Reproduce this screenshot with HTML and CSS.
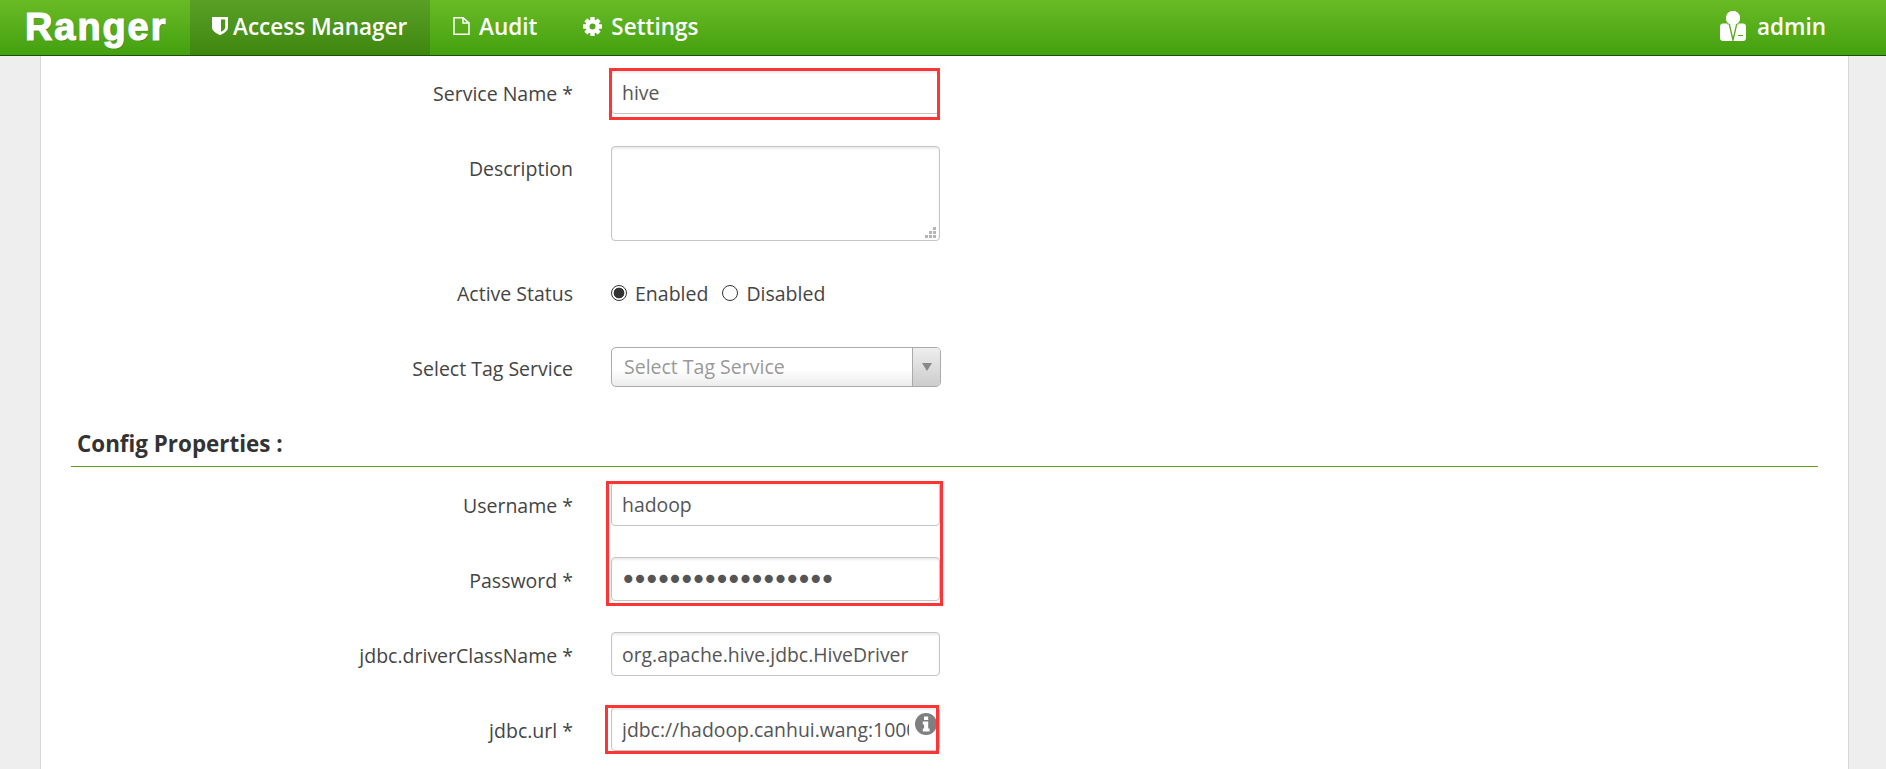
FILE: index.html
```html
<!DOCTYPE html>
<html lang="en">
<head>
<meta charset="utf-8">
<title>Ranger - Service</title>
<link rel="stylesheet" href="styles.css">
</head>
<body>
<header class="navbar">
  <a class="brand">Ranger</a>
  <nav class="nav-items">
    <a class="nav-item nav-item-active">
      <svg class="nav-icon icon-shield" viewBox="0 0 16 18"><path fill="#fff" d="M0 0h16v10.500c0 3.500-4.500 6-8 7.500-3.500-1.500-8-4-8-7.500z"/><path fill="#4c941b" d="M9 2.500h4.200v7.800c0 2-2.500 3.600-4.200 4.500z"/></svg>
      <span>Access Manager</span>
    </a>
    <a class="nav-item">
      <svg class="nav-icon icon-file" viewBox="0 0 17 18"><path fill="none" stroke="#fff" stroke-width="1.500" d="M1 .8h9l6 5v11.400H1z"/><path fill="none" stroke="#fff" stroke-width="1.500" d="M10 1v5h6"/></svg>
      <span>Audit</span>
    </a>
    <a class="nav-item">
      <svg class="nav-icon icon-gear" viewBox="0 0 19 19"><g fill="#fff"><rect x="7.300" y="0" width="4.400" height="19" rx=".6"/><rect x="7.300" y="0" width="4.400" height="19" rx=".6" transform="rotate(45 9.500 9.500)"/><rect x="7.300" y="0" width="4.400" height="19" rx=".6" transform="rotate(90 9.500 9.500)"/><rect x="7.300" y="0" width="4.400" height="19" rx=".6" transform="rotate(135 9.500 9.500)"/><circle cx="9.500" cy="9.500" r="7"/></g><circle cx="9.500" cy="9.500" r="3" fill="#55a81c"/></svg>
      <span>Settings</span>
    </a>
  </nav>
  <a class="user">
    <svg class="user-icon" viewBox="0 0 26 30"><circle cx="13" cy="7" r="7" fill="#fff"/><path fill="#fff" d="M3 12.500h20c1.700 0 3 1.300 3 3V27c0 1.700-1.300 3-3 3H3c-1.700 0-3-1.300-3-3V15.500c0-1.700 1.300-3 3-3z"/><path fill="#56a81c" d="M8.500 12.500h1.300L13 26l3.200-13.500h1.300L13.500 30h-1zM18 24h5v1h-5z"/><path fill="#56a81c" d="M7 12.500h12v.8H7z"/><circle cx="13" cy="7" r="7" fill="#fff"/></svg>
    <span>admin</span>
  </a>
</header>

<main class="panel">
  <div class="row">
    <label class="label">Service Name *</label>
    <input class="field" type="text" value="hive">
  </div>
  <div class="row row-description">
    <label class="label">Description</label>
    <div class="field-wrap">
      <textarea class="field field-area"></textarea>
      <svg class="grip" viewBox="0 0 11 11"><g fill="#b5b5b5"><rect x="8" y="0" width="3" height="3"/><rect x="4" y="4" width="3" height="3"/><rect x="8" y="4" width="3" height="3"/><rect x="0" y="8" width="3" height="3"/><rect x="4" y="8" width="3" height="3"/><rect x="8" y="8" width="3" height="3"/></g></svg>
    </div>
  </div>
  <div class="row row-status">
    <label class="label label-status">Active Status</label>
    <div class="radios">
      <span class="radio radio-on"></span><span class="radio-text">Enabled</span>
      <span class="radio radio-second"></span><span class="radio-text">Disabled</span>
    </div>
  </div>
  <div class="row row-select">
    <label class="label label-select">Select Tag Service</label>
    <div class="select">
      <span class="select-text">Select Tag Service</span>
      <span class="select-arrow"><i class="triangle"></i></span>
    </div>
  </div>

  <h2 class="section-title">Config Properties :</h2>

  <div class="row">
    <label class="label">Username *</label>
    <input class="field" type="text" value="hadoop">
  </div>
  <div class="row">
    <label class="label">Password *</label>
    <input class="field field-password" type="password" value="abcdefghijklmnopqr">
  </div>
  <div class="row">
    <label class="label">jdbc.driverClassName *</label>
    <input class="field" type="text" value="org.apache.hive.jdbc.HiveDriver">
  </div>
  <div class="row">
    <label class="label">jdbc.url *</label>
    <div class="field-wrap">
      <input class="field field-url" type="text" value="jdbc://hadoop.canhui.wang:10000">
      <svg class="info-icon" viewBox="0 0 22 22"><circle cx="11" cy="11" r="11" fill="#7f7f7f"/><path fill="#fff" d="M9 3.500h4.200v3.400H9zM7.800 8.600h5.400v7h1.400v3H7.800v-3h1.300v-4H7.800z"/></svg>
    </div>
  </div>
</main>

<div class="mark mark-service"></div>
<div class="mark mark-credentials"></div>
<div class="mark mark-url"></div>
</body>
</html>
```
FILE: styles.css
```css
* { box-sizing: border-box; }

html, body {
  margin: 0;
  height: 769px;
  overflow: hidden;
}

body {
  position: relative;
  display: flex;
  flex-direction: column;
  background: #eeeeee;
  font-family: "Open Sans", "Liberation Sans", sans-serif;
  color: #444444;
}

.navbar {
  flex: none;
  display: flex;
  align-items: stretch;
  height: 56px;
  background: linear-gradient(#69bb25, #44a010);
  border-bottom: 1px solid #1f4f06;
  color: #ffffff;
}

.brand {
  width: 190px;
  padding-left: 25px;
  font-family: "Liberation Sans", Arial, sans-serif;
  font-size: 38px;
  font-weight: 700;
  line-height: 54px;
  letter-spacing: 1.900px;
  -webkit-text-stroke: 1.200px #ffffff;
  text-shadow: 1px 1px 1px rgba(60, 60, 60, 0.45);
}

.nav-items {
  display: flex;
}

.nav-item {
  display: flex;
  align-items: center;
  gap: 9px;
  padding: 0 23px 3px;
  font-size: 22.500px;
  font-weight: 600;
}

.nav-item-active {
  width: 240px;
  gap: 5px;
  padding: 0 0 3px 22px;
  background: linear-gradient(#5aa027, #3e870f);
}

.nav-icon { flex: none; }
.icon-shield { width: 16px; height: 18px; }
.icon-file { width: 17px; height: 18px; }
.icon-gear { width: 19px; height: 19px; }

.user {
  display: flex;
  align-items: center;
  gap: 11px;
  margin-left: auto;
  padding: 0 60px 3px 0;
  font-size: 22.500px;
  font-weight: 600;
}

.user-icon { width: 26px; height: 30px; }

.panel {
  flex: 1;
  width: 1809px;
  margin-left: 40px;
  padding: 14px 30px 0;
  background: #ffffff;
  border-left: 1px solid #d6d6d6;
  border-right: 1px solid #d6d6d6;
}

.row {
  display: flex;
  gap: 38px;
  margin-bottom: 31px;
}

.label {
  width: 502px;
  height: 44px;
  padding-top: 3px;
  font-size: 19.500px;
  line-height: 42px;
  text-align: right;
}

.field {
  display: block;
  width: 329px;
  height: 44px;
  padding: 0 10px;
  font-family: inherit;
  font-size: 19.400px;
  color: #555555;
  background: #ffffff;
  border: 1px solid #c4c4c4;
  border-radius: 4px;
  box-shadow: inset 0 2px 2px rgba(0, 0, 0, 0.08);
  outline: none;
}

.field-password {
  font-family: "DejaVu Sans", sans-serif;
  font-size: 28px;
  letter-spacing: -4.800px;
  padding-left: 8px;
}

.field-area {
  height: 95px;
  margin-top: 1px;
  resize: none;
}

.grip {
  position: absolute;
  right: 4px;
  bottom: 3px;
  width: 11px;
  height: 11px;
}

.row-description { margin-bottom: 0; }

.row-status {
  align-items: center;
  height: 30px;
  margin-top: 37px;
  margin-bottom: 0;
}

.label-status {
  height: 30px;
  padding-top: 1px;
  line-height: 30px;
}

.radios {
  display: flex;
  align-items: center;
  font-size: 19.500px;
}

.radio {
  flex: none;
  width: 16px;
  height: 16px;
  border: 1px solid #333333;
  border-radius: 50%;
  background: #ffffff;
}

.radio-on {
  background: radial-gradient(circle, #333333 0 5px, #ffffff 5.700px);
}

.radio-second { margin-left: 14px; }

.radio-text { margin-left: 8px; }

.row-select {
  height: 40px;
  margin-top: 39px;
  margin-bottom: 0;
}

.label-select {
  padding-top: 0;
  line-height: 44px;
}

.select {
  display: flex;
  justify-content: space-between;
  width: 330px;
  height: 40px;
  background: linear-gradient(#ffffff 55%, #ececec);
  border: 1px solid #aaaaaa;
  border-radius: 5px;
  overflow: hidden;
}

.select-text {
  padding-left: 12px;
  font-size: 19.500px;
  line-height: 38px;
  color: #999999;
}

.select-arrow {
  display: flex;
  align-items: center;
  justify-content: center;
  width: 28px;
  background: linear-gradient(#eeeeee, #cccccc);
  border-left: 1px solid #aaaaaa;
}

.triangle {
  width: 0;
  height: 0;
  border-left: 5px solid transparent;
  border-right: 5px solid transparent;
  border-top: 8px solid #888888;
}

.section-title {
  margin: 39px 0 15px;
  padding: 1px 0 5px 6px;
  font-size: 22.400px;
  font-weight: 700;
  line-height: 34px;
  color: #333333;
  border-bottom: 1px solid #62a01c;
}

.field-wrap {
  position: relative;
  width: 329px;
}

.field-url { padding-right: 30px; }

.info-icon {
  position: absolute;
  top: 6px;
  right: 3px;
  width: 22px;
  height: 22px;
}

.mark {
  position: absolute;
  border: 3px solid #fd3535;
  pointer-events: none;
}

.mark-service { left: 609px; top: 68px; width: 331px; height: 52px; }
.mark-credentials { left: 606px; top: 481px; width: 337px; height: 125px; }
.mark-url { left: 605px; top: 705px; width: 334px; height: 49px; }
```
